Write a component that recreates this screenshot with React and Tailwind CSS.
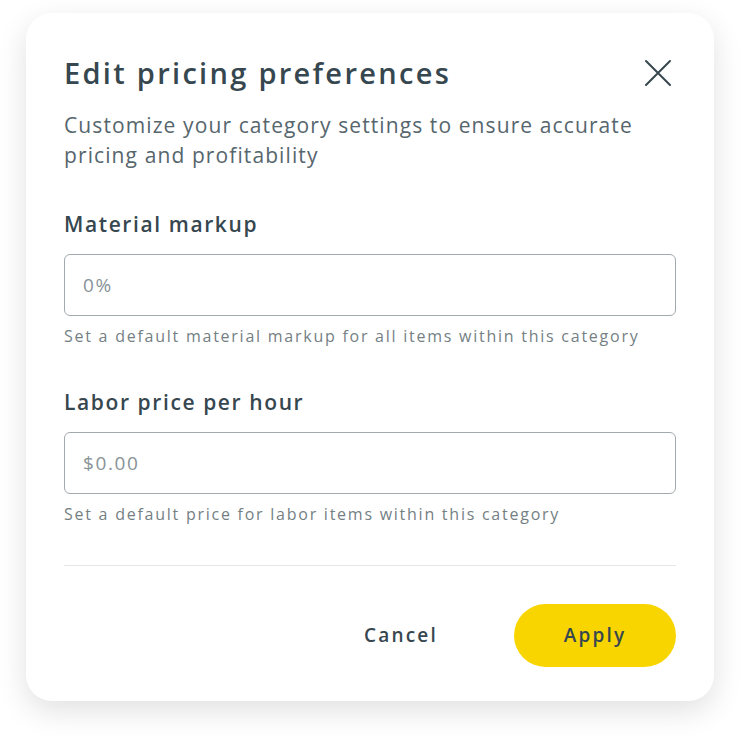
import React from 'react';

const Field = ({ label, placeholder, help }) => (
  <div className="mt-[39px]">
    <label className="block text-[21px] leading-[30px] font-semibold text-[#37474f] tracking-[1.6px]">{label}</label>
    <input
      type="text"
      placeholder={placeholder}
      className="mt-[15px] w-full h-[62px] px-[18px] rounded-[6px] border border-[#a3aaad] text-[19px] tracking-[1.6px] text-[#37474f] placeholder-[#889398] outline-none"
    />
    <p className="mt-[8px] text-[16px] leading-[24px] text-[#747f84] tracking-[1.75px]">{help}</p>
  </div>
);

const App = () => (
  <div className="min-h-screen bg-white px-[26px] pt-[13px] font-['Open_Sans',sans-serif]">
    <div className="bg-white rounded-[26px] shadow-[0_10px_30px_rgba(0,0,0,0.12)] px-[38px] pt-[40px] pb-[34px]">
      <div className="flex items-center justify-between h-[40px]">
        <h2 className="text-[29px] leading-[40px] font-semibold text-[#37474f] tracking-[2.3px]">Edit pricing preferences</h2>
        <button className="w-[32px] h-[32px] flex items-center justify-center mr-[2px]">
          <svg width="28" height="28" viewBox="0 0 28 28" fill="none" stroke="#37474f" strokeWidth="2" strokeLinecap="round">
            <path d="M2 2L26 26M26 2L2 26" />
          </svg>
        </button>
      </div>
      <p className="mt-[17px] max-w-[590px] text-[21px] leading-[30px] text-[#56666d] tracking-[1.1px]">
        Customize your category settings to ensure accurate pricing and profitability
      </p>

      <Field label="Material markup" placeholder="0%" help="Set a default material markup for all items within this category" />
      <Field label="Labor price per hour" placeholder="$0.00" help="Set a default price for labor items within this category" />

      <div className="mt-[39px] border-t border-[#e4e6e7]" />

      <div className="mt-[38px] flex justify-end gap-[32px]">
        <button className="w-[162px] h-[63px] rounded-full text-[19px] font-semibold text-[#37474f] tracking-[2.2px]">Cancel</button>
        <button className="w-[162px] h-[63px] rounded-full bg-[#f9d500] text-[19px] font-semibold text-[#37474f] tracking-[2.2px]">Apply</button>
      </div>
    </div>
  </div>
);

export default App;
